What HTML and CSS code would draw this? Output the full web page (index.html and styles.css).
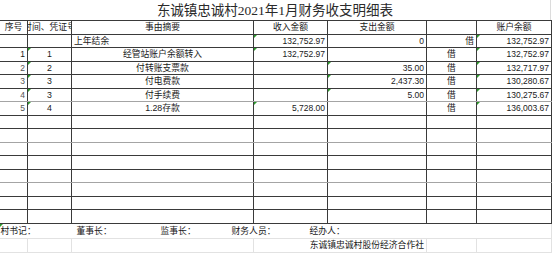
FILE: index.html
```html
<!DOCTYPE html>
<html lang="zh-CN">
<head>
  <meta charset="UTF-8" />
  <title>东诚镇忠诚村2021年1月财务收支明细表</title>
  <link rel="stylesheet" href="styles.css">
</head>
<body>

  <div class="title">东诚镇忠诚村2021年1月财务收支明细表</div>

  <table class="sheet">
    <colgroup>
      <col class="c-no">
      <col class="c-voucher">
      <col class="c-desc">
      <col class="c-in">
      <col class="c-out">
      <col class="c-dir">
      <col class="c-bal">
    </colgroup>
    <thead>
      <tr>
        <th>序号</th>
        <th><div class="clip">时间、凭证号</div></th>
        <th>事由摘要</th>
        <th>收入金额</th>
        <th>支出金额</th>
        <th></th>
        <th>账户余额</th>
      </tr>
    </thead>
    <tbody>
      <tr>
        <td></td>
        <td></td>
        <td class="left">上年结余</td>
        <td class="num mark">132,752.97</td>
        <td class="num">0</td>
        <td class="right">借</td>
        <td class="num mark">132,752.97</td>
      </tr>
      <tr>
        <td class="num">1</td>
        <td class="center mark">1</td>
        <td class="center">经管站账户余额转入</td>
        <td class="num mark">132,752.97</td>
        <td class="num"></td>
        <td class="center">借</td>
        <td class="num mark">132,752.97</td>
      </tr>
      <tr>
        <td class="num dim">2</td>
        <td class="center mark">2</td>
        <td class="center">付转账支票款</td>
        <td class="num"></td>
        <td class="num mark">35.00</td>
        <td class="center">借</td>
        <td class="num mark">132,717.97</td>
      </tr>
      <tr>
        <td class="num dim">3</td>
        <td class="center mark">3</td>
        <td class="center">付电费款</td>
        <td class="num"></td>
        <td class="num mark">2,437.30</td>
        <td class="center">借</td>
        <td class="num mark">130,280.67</td>
      </tr>
      <tr class="brk">
        <td class="num dim">4</td>
        <td class="center mark">3</td>
        <td class="center">付手续费</td>
        <td class="num"></td>
        <td class="num mark">5.00</td>
        <td class="center">借</td>
        <td class="num mark">130,275.67</td>
      </tr>
      <tr>
        <td class="num dim">5</td>
        <td class="center mark">4</td>
        <td class="center">1.28存款</td>
        <td class="num mark">5,728.00</td>
        <td class="num"></td>
        <td class="center">借</td>
        <td class="num mark">136,003.67</td>
      </tr>
      <tr><td></td><td></td><td></td><td></td><td></td><td></td><td></td></tr>
      <tr class="brk"><td></td><td></td><td></td><td></td><td></td><td></td><td></td></tr>
      <tr><td></td><td></td><td></td><td></td><td></td><td></td><td></td></tr>
      <tr><td></td><td></td><td></td><td></td><td></td><td></td><td></td></tr>
      <tr class="brk"><td></td><td></td><td></td><td></td><td></td><td></td><td></td></tr>
      <tr><td></td><td></td><td></td><td></td><td></td><td></td><td></td></tr>
      <tr><td></td><td></td><td></td><td></td><td></td><td></td><td></td></tr>
      <tr class="last"><td></td><td></td><td></td><td></td><td></td><td></td><td></td></tr>

      <!-- signatures under the sheet -->
      <tr class="sign">
        <td colspan="7" class="mark">
          <div class="signers">
            <span>村书记：</span>
            <span>董事长：</span>
            <span>监事长：</span>
            <span>财务人员：</span>
            <span>经办人：</span>
          </div>
        </td>
      </tr>
      <tr class="org">
        <td></td>
        <td></td>
        <td></td>
        <td colspan="2" class="right">东诚镇忠诚村股份经济合作社</td>
        <td></td>
        <td></td>
      </tr>
    </tbody>
  </table>

</body>
</html>
```

FILE: styles.css
```css
body {
  margin: 0;
  background: #fff;
  color: #1a1a1a;
  font-family: 'Liberation Sans', 'Noto Sans CJK SC', sans-serif;
  width: 554px;
  overflow: hidden;
}

.title {
  width: 551px;
  height: 20px;
  line-height: 21px;
  text-align: center;
  font-family: 'Liberation Serif', 'Noto Sans CJK SC', serif;
  font-size: 13.5px;
  color: #2a2a2a;
  border-right: 1px solid #dcdcdc;
  box-sizing: border-box;
}

.sheet {
  border-collapse: collapse;
  table-layout: fixed;
  width: 552px;
  margin-left: -1px;
  font-size: 8.8px;
}

.c-no { width: 28px; }
.c-voucher { width: 44px; }
.c-desc { width: 182px; }
.c-in { width: 74px; }
.c-out { width: 99px; }
.c-dir { width: 50px; }
.c-bal { width: 75px; }

.sheet tr {
  height: 13.5px;
}

.sheet th,
.sheet td {
  border: 1px solid #3a3a3a;
  padding: 0 2px;
  line-height: 12px;
  white-space: nowrap;
  overflow: hidden;
  font-weight: normal;
  position: relative;
}

.sheet th {
  text-align: center;
}

.sheet tr.brk td {
  border-bottom-color: #a4a4a4;
}

.clip {
  display: flex;
  justify-content: center;
  overflow: hidden;
  margin: 0 -2px;
}

.num {
  text-align: right;
  font-size: 8.5px;
}

.left { text-align: left; }
.center { text-align: center; }
.right { text-align: right; }

.dim {
  color: #555;
}

/* excel's little green "number stored as text" corner */
.mark::before {
  content: '';
  position: absolute;
  top: 0;
  left: 0;
  border-top: 3px solid #2c9a2c;
  border-right: 3px solid transparent;
}

.sheet tr.sign td {
  border: none;
  border-bottom: 1px solid #e2e2e2;
  border-right: 1px solid #e2e2e2;
  padding: 0;
  height: 14px;
}

.signers {
  display: grid;
  grid-template-columns: 76px 84px 71px 78px auto;
  padding-left: 1px;
}

.sheet tr.org td {
  border: 1px solid #e2e2e2;
  border-top: none;
  height: 13px;
}
```
